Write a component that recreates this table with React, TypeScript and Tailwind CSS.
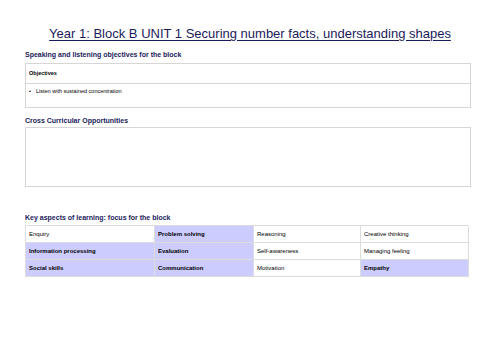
const cells: { text: string; on: boolean; bold: boolean }[][] = [
  [
    { text: "Enquiry", on: false, bold: false },
    { text: "Problem solving", on: true, bold: true },
    { text: "Reasoning", on: false, bold: false },
    { text: "Creative thinking", on: false, bold: false },
  ],
  [
    { text: "Information processing", on: true, bold: true },
    { text: "Evaluation", on: true, bold: true },
    { text: "Self-awareness", on: false, bold: false },
    { text: "Managing feeling", on: false, bold: false },
  ],
  [
    { text: "Social skills", on: true, bold: true },
    { text: "Communication", on: true, bold: true },
    { text: "Motivation", on: false, bold: false },
    { text: "Empathy", on: true, bold: true },
  ],
];

export default function App() {
  return (
    <div className="h-[354px] w-[500px] bg-white font-['Liberation_Sans',sans-serif] text-black">
      <div className="px-[25px] pt-[26px]">
        <h1 className="text-center text-[13px] leading-[16px] text-[#1b1b5c] underline underline-offset-2">
          Year 1: Block B UNIT 1 Securing number facts, understanding shapes
        </h1>

        <h2 className="mt-[8px] text-[7px] leading-[9px] font-bold text-[#1b1b5c]">
          Speaking and listening objectives for the block
        </h2>
        <div className="mt-[4px] w-[446px] border border-[#d6d6d6]">
          <div className="flex h-[20px] items-center border-b border-[#d6d6d6] px-[3px] text-[5.5px] font-bold">
            Objectives
          </div>
          <div className="flex h-[23px] items-start pt-[3px] pl-[3px] text-[5.5px]">
            <span className="w-[7px]">•</span>
            <span>Listen with sustained concentration</span>
          </div>
        </div>

        <h2 className="mt-[8px] text-[7px] leading-[9px] font-bold text-[#1b1b5c]">
          Cross Curricular Opportunities
        </h2>
        <div className="mt-[2px] h-[60px] w-[446px] border border-[#d6d6d6]" />

        <h2 className="mt-[26px] text-[7px] leading-[9px] font-bold text-[#1b1b5c]">
          Key aspects of learning: focus for the block
        </h2>
        <div className="mt-[3px] grid w-[443px] grid-cols-[129px_99px_107px_108px] border-t border-l border-[#dcdcdc]">
          {cells.flat().map((c, i) => (
            <div
              key={i}
              className={`flex h-[17px] items-center border-r border-b border-[#dcdcdc] px-[3px] text-[6px] ${
                c.on ? "bg-[#ccccff]" : "bg-white"
              } ${c.bold ? "font-bold" : ""}`}
            >
              {c.text}
            </div>
          ))}
        </div>
      </div>
    </div>
  );
}
